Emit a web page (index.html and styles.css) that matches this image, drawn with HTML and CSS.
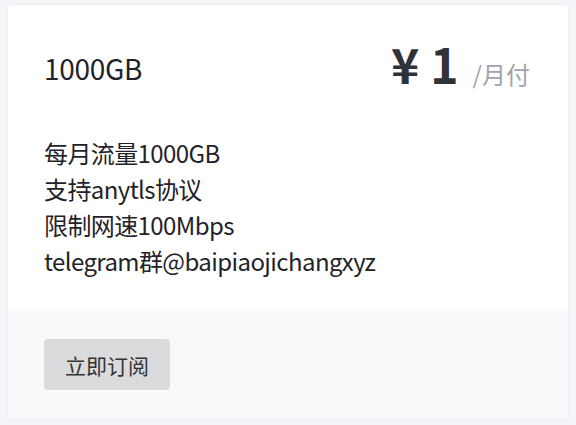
FILE: index.html
```html
<!DOCTYPE html>
<html lang="zh-CN">
<head>
<meta charset="utf-8">
<link rel="stylesheet" href="styles.css">
</head>
<body>
<div class="card">
  <div class="card-body">
    <div class="head">
      <div class="plan">1000GB</div>
      <div class="price"><span class="amount">¥ 1</span><span class="period">/月付</span></div>
    </div>
    <div class="desc">
      <div>每月流量1000GB</div>
      <div>支持anytls协议</div>
      <div>限制网速100Mbps</div>
      <div>telegram群@baipiaojichangxyz</div>
    </div>
  </div>
  <div class="card-foot">
    <button class="btn">立即订阅</button>
  </div>
</div>
</body>
</html>
```
FILE: styles.css
```css
html, body {
  margin: 0;
  padding: 0;
  background: #f4f5f9;
  font-family: "Noto Sans CJK SC", "Noto Sans", sans-serif;
  color: #1f2329;
}
body {
  padding: 5px 8px 6px 8px;
}
.card {
  background: #fff;
  border-radius: 4px;
  box-shadow: 0 0 0 1px #eceef3;
  overflow: hidden;
  height: 414px;
  display: flex;
  flex-direction: column;
}
.card-body {
  padding: 38px 38px 0 36px;
  flex: 1;
}
.head {
  display: flex;
  justify-content: space-between;
  align-items: center;
}
.plan {
  font-size: 28px;
  letter-spacing: -0.3px;
  line-height: 40px;
  margin-top: 2px;
}
.price {
  display: flex;
  align-items: baseline;
}
.amount {
  font-size: 48px;
  font-weight: 700;
  color: #2f3237;
  line-height: 40px;
}
.period {
  font-size: 24px;
  color: #a0a4ab;
  margin-left: 14px;
}
.desc {
  margin-top: 44px;
  font-size: 24px;
  line-height: 36px;
  letter-spacing: -0.6px;
}
.card-foot {
  background: #f8f9fb;
  padding: 30px 36px 29px;
}
.btn {
  font-family: inherit;
  font-size: 21px;
  color: #333;
  background: #dadbdd;
  border: none;
  border-radius: 4px;
  width: 126px;
  height: 51px;
  padding: 0;
}
```
